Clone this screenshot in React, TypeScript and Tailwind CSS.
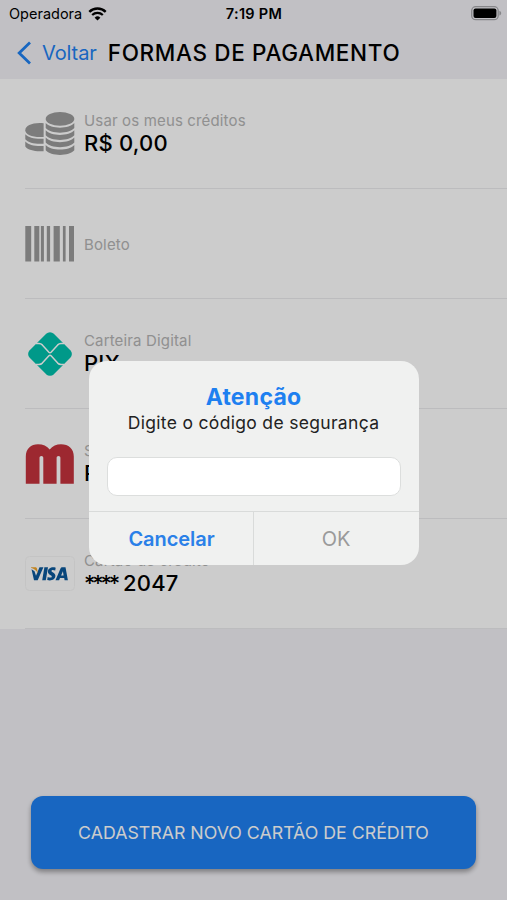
import { useState, type ReactNode } from 'react';

type PaymentMethod = {
  id: string;
  label: string;
  prefix?: string;
  value?: string;
  icon: ReactNode;
};

const CoinsIcon = () => (
  <svg viewBox="0 0 50 44" className="w-[50px] h-[44px]" fill="#9b9b9b">
    <ellipse cx="35" cy="6.900" rx="14.300" ry="6.800" />
    <path d="M20.700 11c5 6.200 23.600 6.200 28.600 0v5c-5 6.200-23.600 6.200-28.600 0z" />
    <path d="M20.700 18.300c5 6.200 23.600 6.200 28.600 0v5c-5 6.200-23.600 6.200-28.600 0z" />
    <path d="M20.700 25.600c5 6.200 23.600 6.200 28.600 0v5c-5 6.200-23.600 6.200-28.600 0z" />
    <path d="M20.700 32.900c5 6.200 23.600 6.200 28.600 0v5.400c-5 6.200-23.600 6.200-28.600 0z" />
    <path d="M18.600 11.300C8 10.300.3 13.500.3 18.200c0 4.500 8 7.600 18.300 6.700z" />
    <path d="M.3 22.300c3 3.700 10.500 4.900 18.300 4.400v5c-8 .6-15.300-.7-18.300-4.400z" />
    <path d="M.3 29.600c3 3.700 10.500 4.900 18.300 4.400v5.200c-8 .6-15.300-.7-18.300-4.600z" />
  </svg>
);

const BarcodeIcon = () => (
  <svg viewBox="0 0 50 36" className="w-[50px] h-[36px]" fill="#9b9b9b">
    <rect x="0.300" width="5.900" height="35.500" />
    <rect x="9.300" width="5" height="35.500" />
    <rect x="15.900" width="3" height="35.500" />
    <rect x="21.800" width="3.300" height="35.500" />
    <rect x="28.600" width="6.200" height="35.500" />
    <rect x="37.900" width="2.700" height="35.500" />
    <rect x="44" width="5" height="35.500" />
  </svg>
);

const PixIcon = () => (
  <svg viewBox="0 0 44 44" className="w-[44px] h-[44px]">
    <path
      d="M18.200 1.700a5.400 5.400 0 0 1 7.600 0l16.500 16.500a5.400 5.400 0 0 1 0 7.600L25.800 42.300a5.400 5.400 0 0 1-7.600 0L1.700 25.800a5.400 5.400 0 0 1 0-7.600z"
      fill="#00c0ac"
    />
    <path
      d="M8 11.600h3c1.400 0 2.400.4 3.300 1.300l6.600 7.300c.7.700 1.500.7 2.200 0l6.600-7.300c.9-.9 1.900-1.300 3.300-1.300h3M8 32.400h3c1.400 0 2.400-.4 3.300-1.300l6.600-7.300c.7-.7 1.500-.7 2.200 0l6.600 7.300c.9.900 1.900 1.300 3.300 1.300h3"
      fill="none"
      stroke="#fff"
      strokeWidth="1.500"
    />
  </svg>
);

const MLogo = () => (
  <svg viewBox="0 0 50 42" className="w-[50px] h-[42px]">
    <path
      d="M.8 40.800V13.500C.8 5.500 6 1.200 13 1.200c5 0 9 1.800 11.700 5.300C27.500 3 31.500 1.200 36 1.200c7.500 0 12.800 4.500 12.800 12.300v27.300H35.400V15c0-1.200-.8-1.900-1.900-1.900s-1.900.7-1.900 1.900v25.800H18.300V15c0-1.200-.8-1.900-1.900-1.900s-1.900.7-1.900 1.900v25.800z"
      fill="#c5333c"
    />
  </svg>
);

const VisaIcon = () => (
  <svg viewBox="0 0 50 36" className="w-[50px] h-[36px]">
    <rect x="0.500" y="0.500" width="49" height="34" rx="4" fill="#fff" stroke="#f6f6f6" />
    <g transform="translate(.7 -1.200) scale(1 1.060)">
      <path d="M13.800 11.800h3.900L12 24H8.300L5.800 13.600l3 1.900 1.500 4.300z" fill="#0b589a" />
      <path d="M5.300 11.800h4.300c1 0 1.500.5 1.700 1.400l1 4.700c-1.400-2.900-3.500-4.600-7-5.600z" fill="#f2a62b" />
      <path d="M18.700 11.800h3.600L20.100 24h-3.600z" fill="#0b589a" />
      <path
        d="M30 12.100l-.5 2.700c-2-.8-3.700-.7-3.700.4 0 1.400 3.900 1.600 3.900 4.600 0 3.800-4.500 5.100-8.200 3.900l.5-2.800c2.200 1 4.100.8 4.100-.5 0-1.300-3.900-1.600-3.900-4.500 0-3.500 4.200-5 7.800-3.800z"
        fill="#0b589a"
      />
      <path
        d="M36.700 11.800h3.100L42.200 24h-3.300l-.4-2h-4.200l-.9 2h-3.600l5-11c.4-.9 1-1.200 1.900-1.200zm.5 3.700l-1.800 4h2.500z"
        fill="#0b589a"
        fillRule="evenodd"
      />
    </g>
  </svg>
);

const WifiIcon = () => (
  <svg viewBox="0 0 20 15" className="w-[19px] h-[14px]">
    <path d="M1.200 5.200a12.600 12.600 0 0 1 17.600 0" fill="none" stroke="#000" strokeWidth="2.600" />
    <path d="M4.300 8.600a8.200 8.200 0 0 1 11.400 0" fill="none" stroke="#000" strokeWidth="2.400" />
    <path d="M10 14.500l-3.100-3.100a4.500 4.500 0 0 1 6.200 0z" />
  </svg>
);

const BatteryIcon = () => (
  <svg viewBox="0 0 31 15" className="w-[31px] h-[15px]">
    <rect x="0.700" y="0.700" width="26.500" height="13" rx="4" fill="none" stroke="#a8a8ac" strokeWidth="1.300" />
    <rect x="2.500" y="2.500" width="22.900" height="9.400" rx="2" />
    <path d="M28.400 4.800c2.400.7 2.400 4.100 0 4.800z" fill="#a8a8ac" />
  </svg>
);

const methods: PaymentMethod[] = [
  { id: 'creditos', label: 'Usar os meus créditos', value: 'R$ 0,00', icon: <CoinsIcon /> },
  { id: 'boleto', label: 'Boleto', icon: <BarcodeIcon /> },
  { id: 'pix', label: 'Carteira Digital', value: 'PIX', icon: <PixIcon /> },
  { id: 'saldo', label: 'Saldo', value: 'R$ 0,00', icon: <MLogo /> },
  { id: 'cartao', label: 'Cartão de crédito', prefix: '****', value: '2047', icon: <VisaIcon /> },
];

export default function App() {
  const [code, setCode] = useState('');

  return (
    <div className="relative flex h-[900px] w-[507px] flex-col overflow-hidden bg-[#f2f1f6] font-['Inter',sans-serif] text-black">
      {/* Status bar */}
      <div className="grid h-[27px] grid-cols-3 items-center pl-[9px] pr-[5px]">
        <div className="flex items-center gap-[6px] text-[14.5px]">
          <span>Operadora</span>
          <WifiIcon />
        </div>
        <span className="pr-[3px] text-center text-[14.5px] font-semibold tracking-[0.3px]">7:19 PM</span>
        <div className="flex justify-end">
          <BatteryIcon />
        </div>
      </div>

      {/* Header */}
      <header className="flex h-[52px] items-center pb-px pl-[17px]">
        <button className="flex items-center gap-[10px] text-[#1e80f0]">
          <svg viewBox="0 0 15 24" className="h-[24px] w-[15px]" fill="none" stroke="currentColor" strokeWidth="2.800">
            <path d="M13 1.500L2.200 12 13 22.500" />
          </svg>
          <span className="text-[20px] tracking-[-0.1px]">Voltar</span>
        </button>
        <h1 className="ml-[11px] whitespace-nowrap text-[22.5px] font-[450] tracking-[0.650px]">FORMAS DE PAGAMENTO</h1>
      </header>

      {/* Payment methods */}
      <ul className="bg-white">
        {methods.map((method) => (
          <li key={method.id} className="flex h-[110px] pl-[25px]">
            <div className="flex flex-1 items-center gap-[9px] border-b border-[#ececee]">
              <div className="flex w-[50px] justify-center">{method.icon}</div>
              <div className={`flex flex-col whitespace-nowrap ${method.value ? 'pb-[2px]' : 'pt-[2px]'}`}>
                <span className="text-[15px] leading-[20px] tracking-[0.150px] text-[#b4b4b4]">{method.label}</span>
                {method.value && (
                  <span className="text-[22px] font-medium leading-[24px] tracking-[0.2px]">
                    {method.prefix && <span className="mr-[6px] tracking-[-3.200px]">{method.prefix}</span>}
                    {method.value}
                  </span>
                )}
              </div>
            </div>
          </li>
        ))}
      </ul>

      <div className="mt-auto px-[31px] pb-[31px]">
        <button className="h-[73px] w-full rounded-xl bg-[#1e80f2] pt-[2px] text-[17.750px] text-white shadow-[0_3px_5px_rgba(0,0,0,0.35)]">
          CADASTRAR NOVO CARTÃO DE CRÉDITO
        </button>
      </div>

      {/* Security code dialog */}
      <div className="absolute inset-0 flex items-start justify-center bg-black/20 pt-[361px]">
        <div className="flex h-[204px] w-[330px] flex-col overflow-hidden rounded-[18px] bg-[#f0f1f0]">
          <div className="flex flex-1 flex-col items-center px-[18px] pt-[22px]">
            <h2 className="text-[23px] font-bold leading-[28px] tracking-[0.250px] text-[#1e80f0]">Atenção</h2>
            <p className="whitespace-nowrap text-[17.5px] leading-[24px] tracking-[0.320px] text-[#222]">
              Digite o código de segurança
            </p>
            <input
              value={code}
              onChange={(e) => setCode(e.target.value)}
              className="mt-[22px] h-[39px] w-full rounded-[10px] border border-[#dcdedd] bg-white px-3 outline-none"
            />
          </div>
          <div className="grid h-[54px] grid-cols-2 border-t border-[#d9dbda]">
            <button className="border-r border-[#d9dbda] pl-[2px] text-[20px] font-semibold tracking-[-0.050px] text-[#2a80e8]">
              Cancelar
            </button>
            <button className="text-[20px] text-[#9a9a9a]">OK</button>
          </div>
        </div>
      </div>
    </div>
  );
}
